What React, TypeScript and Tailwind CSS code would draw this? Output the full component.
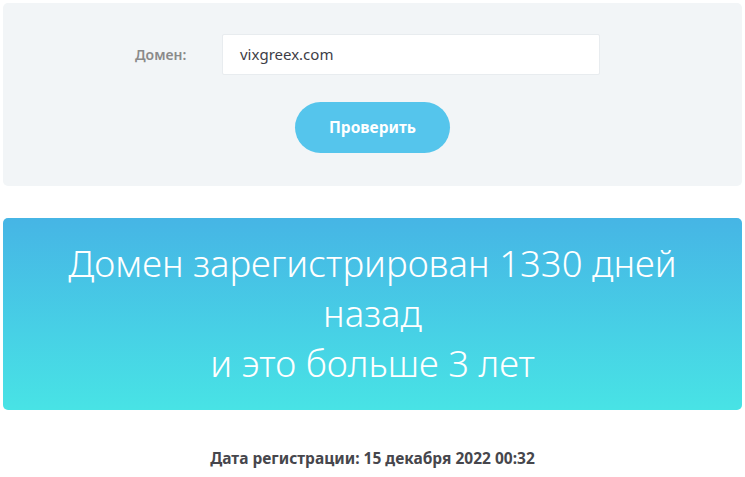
export default function App() {
  return (
    <div className="min-h-[477px] w-[745px] bg-white px-[3px] pt-[3px] font-['Noto_Sans','Open_Sans',sans-serif]">
      <section className="flex flex-col items-center rounded-[5px] bg-[#f2f5f7] pb-[33px] pt-[31px]">
        <div className="flex w-full items-center pl-[132px]">
          <label className="w-[87px] text-[14px] font-semibold text-[#8a8a8a]">Домен:</label>
          <div className="flex h-[41px] w-[378px] items-center rounded-[2px] border border-[#e8ecef] bg-white pl-[17px] text-[15px] text-[#3d3d46]">
            vixgreex.com
          </div>
        </div>
        <button className="mt-[27px] h-[51px] w-[155px] rounded-full bg-[#55c5ec] text-[15.5px] font-bold text-white">
          Проверить
        </button>
      </section>

      <section className="mt-[32px] rounded-[5px] bg-gradient-to-b from-[#46b5e5] to-[#48e3e5] pb-[22px] pt-[20px] text-center text-[36.5px] font-light leading-[50px] text-white">
        Домен зарегистрирован 1330 дней
        <br />
        назад
        <br />
        и это больше 3 лет
      </section>

      <p className="mt-[37px] text-center text-[15.5px] font-bold text-[#46464c]">
        Дата регистрации: 15 декабря 2022 00:32
      </p>
    </div>
  )
}
